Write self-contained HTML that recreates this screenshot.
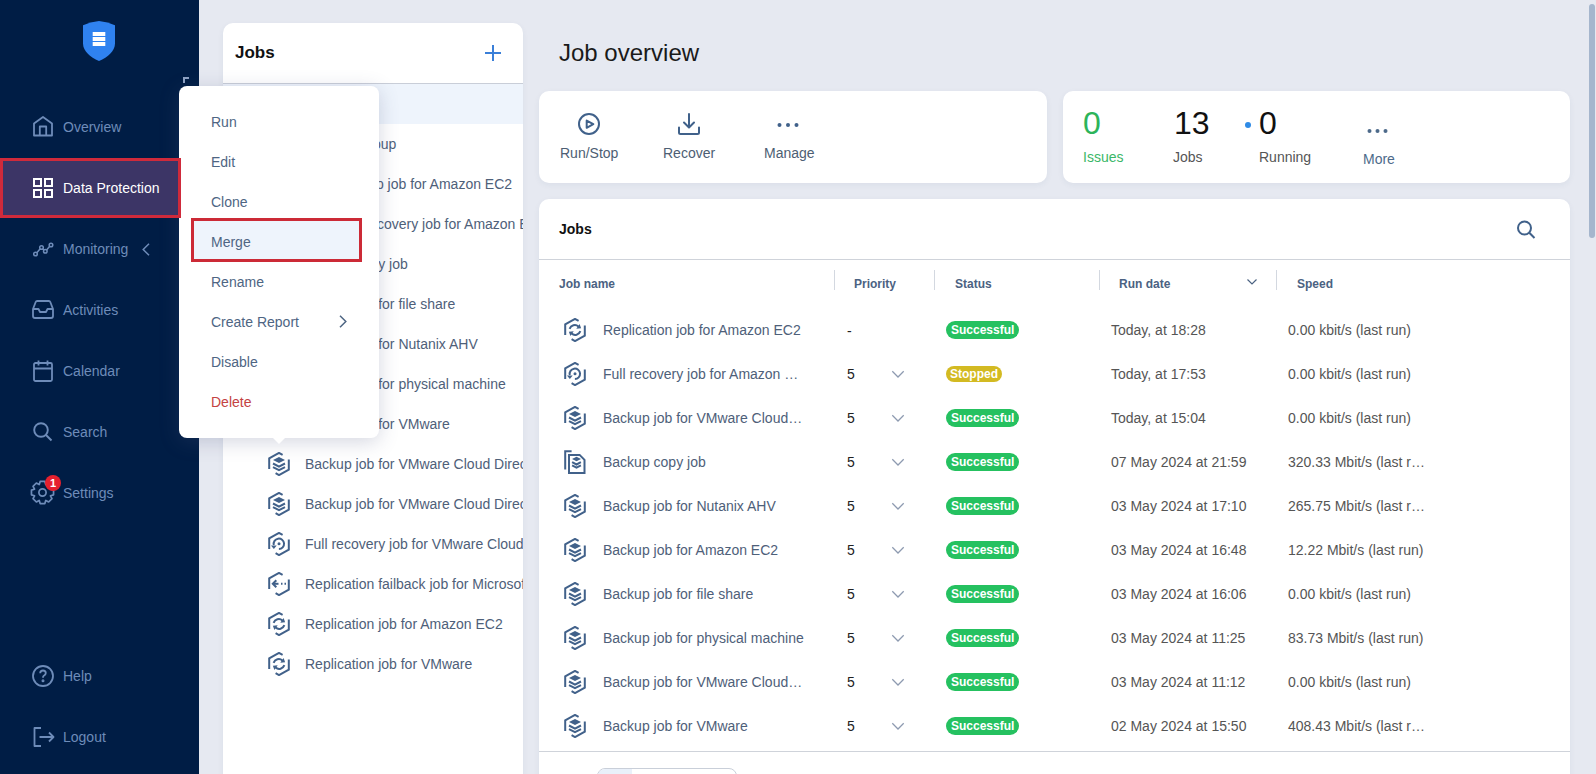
<!DOCTYPE html>
<html><head><meta charset="utf-8">
<style>
*{box-sizing:border-box;margin:0;padding:0}
html,body{width:1596px;height:774px;overflow:hidden}
body{background:#e6e9f1;font-family:"Liberation Sans",sans-serif;font-size:14px;position:relative}
.abs{position:absolute}
#side{left:0;top:0;width:199px;height:774px;background:#001d45}
.nav{position:absolute;left:0;width:199px;height:20px;color:#6e8cb9;font-size:14px;line-height:20px}
.nav span{position:absolute;left:63px;top:0;white-space:nowrap}
.nav svg{position:absolute;left:33px;top:0}
#dp{position:absolute;left:0;top:158px;width:181px;height:60px;background:#3c3566;border:3px solid #cf2a3b;z-index:5}
.card{position:absolute;background:#fff;border-radius:10px;box-shadow:0 2px 6px rgba(40,60,100,.06)}
.lrow{position:absolute;left:223px;width:300px;height:40px;color:#4e6079;white-space:nowrap;overflow:hidden}
.lrow span{position:absolute;top:11px;line-height:18px}
.lrow svg{position:absolute;left:45px;top:8px}
.trow{position:absolute;left:539px;width:1031px;height:44px;white-space:nowrap}
.trow .ic{position:absolute;left:24px;top:10px}
.trow .nm{position:absolute;left:64px;top:13px;line-height:18px;color:#4e6079}
.trow .pr{position:absolute;left:308px;top:13px;line-height:18px;color:#222}
.trow .chev{position:absolute;left:352px;top:17.5px}
.trow .badge{position:absolute;left:407px;top:13px;height:18px;border-radius:9px;background:#25c160;color:#fff;font-weight:bold;font-size:12px;line-height:18px;padding:0 5px}
.trow .badge.st{background:#d3ba22;height:16px;line-height:16px;top:14px;border-radius:8px;padding:0 4px}
.trow .dt{position:absolute;left:572px;top:13px;line-height:18px;color:#555}
.trow .sp{position:absolute;left:749px;top:13px;line-height:18px;color:#555}
.th{position:absolute;top:277px;font-size:12px;font-weight:bold;color:#4b6282;line-height:14px}
.sep{position:absolute;top:270px;width:1px;height:20px;background:#d3d8e0}
.menu{position:absolute;left:179px;top:86px;width:200px;height:352px;background:#fff;border-radius:8px;box-shadow:0 4px 20px rgba(75,85,125,.24)}
.mi{position:absolute;left:32px;color:#4e6583;line-height:18px}
</style></head><body>

<!-- SIDEBAR -->
<div id="side" class="abs">
  <svg class="abs" style="left:83px;top:21px" width="32" height="40" viewBox="0 0 32 40">
    <path d="M16 0 Q7 1 0 4.2 V22.5 C0 30 7 36 16 40 C25 36 32 30 32 22.5 V4.2 Q25 1 16 0Z" fill="#2f82f0"/>
    <rect x="9.7" y="11" width="12.6" height="4" fill="#fff"/>
    <rect x="9.7" y="16" width="12.6" height="4" fill="#fff"/>
    <rect x="9.7" y="21" width="12.6" height="4" fill="#fff"/>
  </svg>
  <svg class="abs" style="left:183px;top:77px" width="6" height="6" viewBox="0 0 6 6"><path d="M1 6V1H6" stroke="#8ea2c4" stroke-width="2" fill="none"/></svg>

  <div class="nav" style="top:117px"><svg style="top:-1px" width="20" height="21" viewBox="0 0 20 21" fill="none" stroke="#6e8cb9" stroke-width="1.8" stroke-linejoin="round"><path d="M1 7.5 L10 1 L19 7.5 V19.5 H1Z"/><path d="M6.8 19.5 V10.5 H13.2 V19.5"/></svg><span>Overview</span></div>

  <div id="dp"></div>
  <div class="nav" style="top:178px;color:#fff;z-index:6"><svg width="20" height="20" viewBox="0 0 20 20" fill="none" stroke="#fff" stroke-width="2"><rect x="1" y="1" width="7" height="7"/><rect x="12" y="1" width="7" height="7"/><rect x="1" y="12" width="7" height="7"/><rect x="12" y="12" width="7" height="7"/></svg><span>Data Protection</span></div>

  <div class="nav" style="top:239px"><svg width="21" height="20" viewBox="0 0 21 20" fill="none" stroke="#6e8cb9" stroke-width="1.5"><circle cx="2.5" cy="15" r="1.8"/><circle cx="8.5" cy="8.5" r="1.8"/><circle cx="12.3" cy="12.3" r="1.8"/><circle cx="18" cy="6" r="1.8"/><path d="M3.8 13.7 L7.2 9.8 M9.8 9.8 L11 11 M13.6 11 L16.7 7.3"/></svg><span>Monitoring</span>
    <svg style="left:142px;top:3.5px" width="8" height="13" viewBox="0 0 8 13" fill="none" stroke="#6e8cb9" stroke-width="1.5"><path d="M7 0.8 L1.2 6.5 L7 12.2"/></svg></div>

  <div class="nav" style="top:300px"><svg style="left:32px" width="22" height="20" viewBox="0 0 22 20" fill="none" stroke="#6e8cb9" stroke-width="1.8" stroke-linejoin="round"><path d="M1 9 L3.7 2 Q4.1 1 5.1 1 H16.9 Q17.9 1 18.3 2 L21 9 V16 Q21 18 19 18 H3 Q1 18 1 16Z"/><path d="M1 9 H6.5 L8 12 H14 L15.5 9 H21"/></svg><span>Activities</span></div>

  <div class="nav" style="top:361px"><svg style="top:-1px" width="20" height="22" viewBox="0 0 20 22" fill="none" stroke="#6e8cb9" stroke-width="1.8"><rect x="1" y="3" width="18" height="18" rx="1.5"/><path d="M1 8.5 H19 M5.5 0.5 V5.5 M14.5 0.5 V5.5"/></svg><span>Calendar</span></div>

  <div class="nav" style="top:422px"><svg width="20" height="20" viewBox="0 0 20 20" fill="none" stroke="#6e8cb9" stroke-width="1.9"><circle cx="8" cy="8" r="6.8"/><path d="M13 13 L18.5 18.5"/></svg><span>Search</span></div>

  <div class="nav" style="top:483px"><svg style="left:30px;top:-3px" width="25" height="25" viewBox="0 0 25 25" fill="none" stroke="#6e8cb9" stroke-width="1.7" stroke-linejoin="round"><path d="M9.28 4.53 L10.15 1.45 L14.85 1.45 L15.72 4.53 L15.86 4.58 L18.65 3.02 L21.98 6.35 L20.42 9.14 L20.47 9.28 L23.55 10.15 L23.55 14.85 L20.47 15.72 L20.42 15.86 L21.98 18.65 L18.65 21.98 L15.86 20.42 L15.72 20.47 L14.85 23.55 L10.15 23.55 L9.28 20.47 L9.14 20.42 L6.35 21.98 L3.02 18.65 L4.58 15.86 L4.53 15.72 L1.45 14.85 L1.45 10.15 L4.53 9.28 L4.58 9.14 L3.02 6.35 L6.35 3.02 L9.14 4.58Z"/><circle cx="12.5" cy="12.5" r="3.6"/></svg><span>Settings</span></div>
  <div class="abs" style="left:45px;top:475px;width:16px;height:16px;border-radius:50%;background:#e5202e;color:#fff;font-size:11px;font-weight:bold;line-height:16px;text-align:center">1</div>

  <div class="nav" style="top:666px"><svg style="left:32px;top:-1px" width="22" height="22" viewBox="0 0 22 22" fill="none" stroke="#6e8cb9" stroke-width="1.8"><circle cx="11" cy="11" r="10"/><path d="M8.2 8.3 Q8.2 5.5 11 5.5 Q13.8 5.5 13.8 8.1 Q13.8 9.8 11.8 10.8 Q11 11.3 11 12.8"/><circle cx="11" cy="15.8" r="0.6" fill="#6e8cb9"/></svg><span>Help</span></div>

  <div class="nav" style="top:727px"><svg width="22" height="20" viewBox="0 0 22 20" fill="none" stroke="#6e8cb9" stroke-width="1.8" stroke-linejoin="round"><path d="M8 1 H1.5 V19 H8"/><path d="M6.5 10 H20.5 M16 5.5 L20.5 10 L16 14.5"/></svg><span>Logout</span></div>
</div>

<!-- MIDDLE PANEL -->
<div class="card" style="left:223px;top:23px;width:300px;height:760px;overflow:hidden;border-radius:10px 10px 0 0">
  <div class="abs" style="left:12px;top:20px;font-size:17px;font-weight:bold;color:#111;line-height:20px">Jobs</div>
  <svg class="abs" style="left:262px;top:22px" width="16" height="16" viewBox="0 0 16 16" stroke="#3a7fd8" stroke-width="2"><path d="M8 0V16M0 8H16"/></svg>
  <div class="abs" style="left:0;top:60px;width:300px;height:1px;background:#c9ced8"></div>
  <div class="abs" style="left:0;top:61px;width:300px;height:40px;background:#eef4fc"></div>
</div>
<div class="abs" style="left:0;top:0"><div class="lrow" style="top:84px"><svg class="" style="left:45px;top:8px" width="22" height="24" viewBox="0 0 22 24" fill="none" stroke="#41618a" stroke-width="2"><path d="M14.6 2.9 L11 0.9 L1.2 6.4 V17" /><path d="M20.8 7.4 V17.6 L11 23.1 L7.6 21.2"/><path d="M5 8 L11 4.9 L17 8 L11 11.1Z" fill="#41618a" stroke="none"/><path d="M5 11.5 L11 14.6 L17 11.5 M5 15.1 L11 18.2 L17 15.1"/></svg><span style="left:82px">All jobs</span></div><div class="lrow" style="top:124px"><svg class="" style="left:45px;top:8px" width="22" height="24" viewBox="0 0 22 24" fill="none" stroke="#41618a" stroke-width="2"><path d="M14.6 2.9 L11 0.9 L1.2 6.4 V17" /><path d="M20.8 7.4 V17.6 L11 23.1 L7.6 21.2"/><path d="M5 8 L11 4.9 L17 8 L11 11.1Z" fill="#41618a" stroke="none"/><path d="M5 11.5 L11 14.6 L17 11.5 M5 15.1 L11 18.2 L17 15.1"/></svg><span style="left:87px">Backup group</span></div><div class="lrow" style="top:164px"><svg class="" style="left:45px;top:8px" width="22" height="24" viewBox="0 0 22 24" fill="none" stroke="#41618a" stroke-width="2"><path d="M14.6 2.9 L11 0.9 L1.2 6.4 V17" /><path d="M20.8 7.4 V17.6 L11 23.1 L7.6 21.2"/><path d="M5 8 L11 4.9 L17 8 L11 11.1Z" fill="#41618a" stroke="none"/><path d="M5 11.5 L11 14.6 L17 11.5 M5 15.1 L11 18.2 L17 15.1"/></svg><span style="left:114px">Backup job for Amazon EC2</span></div><div class="lrow" style="top:204px"><svg class="" style="left:45px;top:8px" width="22" height="24" viewBox="0 0 22 24" fill="none" stroke="#41618a" stroke-width="2"><path d="M14.6 2.9 L11 0.9 L1.2 6.4 V17" /><path d="M20.8 7.4 V17.6 L11 23.1 L7.6 21.2"/><path d="M10.9 17 A5.2 5.2 0 1 0 5.8 13"/><path d="M3 13.4 H8.7 L5.85 16.9Z" fill="#41618a" stroke="none"/><circle cx="11" cy="11.8" r="1.5" fill="#41618a" stroke="none"/></svg><span style="left:115px">Full recovery job for Amazon EBS</span></div><div class="lrow" style="top:244px"><svg class="" style="left:45px;top:8px" width="22" height="24" viewBox="0 0 22 24" fill="none" stroke="#41618a" stroke-width="2"><path d="M7.6 1.2 H1.2 V19.5"/><path d="M5 4.9 H15.6 L20.5 9.8 V22.9 H5Z"/><path d="M8 9 L12.5 6.7 L17 9 L12.5 11.3Z" fill="#41618a" stroke="none"/><path d="M8.1 12.2 L12.5 14.5 L16.9 12.2 M8.1 15.3 L12.5 17.6 L16.9 15.3"/></svg><span style="left:82px">Backup copy job</span></div><div class="lrow" style="top:284px"><svg class="" style="left:45px;top:8px" width="22" height="24" viewBox="0 0 22 24" fill="none" stroke="#41618a" stroke-width="2"><path d="M14.6 2.9 L11 0.9 L1.2 6.4 V17" /><path d="M20.8 7.4 V17.6 L11 23.1 L7.6 21.2"/><path d="M5 8 L11 4.9 L17 8 L11 11.1Z" fill="#41618a" stroke="none"/><path d="M5 11.5 L11 14.6 L17 11.5 M5 15.1 L11 18.2 L17 15.1"/></svg><span style="left:82px">Backup job for file share</span></div><div class="lrow" style="top:324px"><svg class="" style="left:45px;top:8px" width="22" height="24" viewBox="0 0 22 24" fill="none" stroke="#41618a" stroke-width="2"><path d="M14.6 2.9 L11 0.9 L1.2 6.4 V17" /><path d="M20.8 7.4 V17.6 L11 23.1 L7.6 21.2"/><path d="M5 8 L11 4.9 L17 8 L11 11.1Z" fill="#41618a" stroke="none"/><path d="M5 11.5 L11 14.6 L17 11.5 M5 15.1 L11 18.2 L17 15.1"/></svg><span style="left:82px">Backup job for Nutanix AHV</span></div><div class="lrow" style="top:364px"><svg class="" style="left:45px;top:8px" width="22" height="24" viewBox="0 0 22 24" fill="none" stroke="#41618a" stroke-width="2"><path d="M14.6 2.9 L11 0.9 L1.2 6.4 V17" /><path d="M20.8 7.4 V17.6 L11 23.1 L7.6 21.2"/><path d="M5 8 L11 4.9 L17 8 L11 11.1Z" fill="#41618a" stroke="none"/><path d="M5 11.5 L11 14.6 L17 11.5 M5 15.1 L11 18.2 L17 15.1"/></svg><span style="left:82px">Backup job for physical machine</span></div><div class="lrow" style="top:404px"><svg class="" style="left:45px;top:8px" width="22" height="24" viewBox="0 0 22 24" fill="none" stroke="#41618a" stroke-width="2"><path d="M14.6 2.9 L11 0.9 L1.2 6.4 V17" /><path d="M20.8 7.4 V17.6 L11 23.1 L7.6 21.2"/><path d="M5 8 L11 4.9 L17 8 L11 11.1Z" fill="#41618a" stroke="none"/><path d="M5 11.5 L11 14.6 L17 11.5 M5 15.1 L11 18.2 L17 15.1"/></svg><span style="left:82px">Backup job for VMware</span></div><div class="lrow" style="top:444px"><svg class="" style="left:45px;top:8px" width="22" height="24" viewBox="0 0 22 24" fill="none" stroke="#41618a" stroke-width="2"><path d="M14.6 2.9 L11 0.9 L1.2 6.4 V17" /><path d="M20.8 7.4 V17.6 L11 23.1 L7.6 21.2"/><path d="M5 8 L11 4.9 L17 8 L11 11.1Z" fill="#41618a" stroke="none"/><path d="M5 11.5 L11 14.6 L17 11.5 M5 15.1 L11 18.2 L17 15.1"/></svg><span style="left:82px">Backup job for VMware Cloud Director 1</span></div><div class="lrow" style="top:484px"><svg class="" style="left:45px;top:8px" width="22" height="24" viewBox="0 0 22 24" fill="none" stroke="#41618a" stroke-width="2"><path d="M14.6 2.9 L11 0.9 L1.2 6.4 V17" /><path d="M20.8 7.4 V17.6 L11 23.1 L7.6 21.2"/><path d="M5 8 L11 4.9 L17 8 L11 11.1Z" fill="#41618a" stroke="none"/><path d="M5 11.5 L11 14.6 L17 11.5 M5 15.1 L11 18.2 L17 15.1"/></svg><span style="left:82px">Backup job for VMware Cloud Director 2</span></div><div class="lrow" style="top:524px"><svg class="" style="left:45px;top:8px" width="22" height="24" viewBox="0 0 22 24" fill="none" stroke="#41618a" stroke-width="2"><path d="M14.6 2.9 L11 0.9 L1.2 6.4 V17" /><path d="M20.8 7.4 V17.6 L11 23.1 L7.6 21.2"/><path d="M10.9 17 A5.2 5.2 0 1 0 5.8 13"/><path d="M3 13.4 H8.7 L5.85 16.9Z" fill="#41618a" stroke="none"/><circle cx="11" cy="11.8" r="1.5" fill="#41618a" stroke="none"/></svg><span style="left:82px">Full recovery job for VMware Cloud Director</span></div><div class="lrow" style="top:564px"><svg class="" style="left:45px;top:8px" width="22" height="24" viewBox="0 0 22 24" fill="none" stroke="#41618a" stroke-width="2"><path d="M14.6 2.9 L11 0.9 L1.2 6.4 V17" /><path d="M20.8 7.4 V17.6 L11 23.1 L7.6 21.2"/><path d="M5 11.8 H10.5" /><path d="M8.3 8.3 L4.8 11.8 L8.3 15.3"/><path d="M13 11.8 H14.5 M16.5 11.8 H18" /></svg><span style="left:82px">Replication failback job for Microsoft Hyper-V</span></div><div class="lrow" style="top:604px"><svg class="" style="left:45px;top:8px" width="22" height="24" viewBox="0 0 22 24" fill="none" stroke="#41618a" stroke-width="2"><path d="M14.6 2.9 L11 0.9 L1.2 6.4 V17" /><path d="M20.8 7.4 V17.6 L11 23.1 L7.6 21.2"/><path d="M5.6 10.8 A5.6 5.6 0 0 1 14.4 8.4"/><path d="M15.6 5.9 L17.1 10.3 L12.3 10.7Z" fill="#41618a" stroke="none"/><path d="M16.4 13.2 A5.6 5.6 0 0 1 7.6 15.6"/><path d="M6.4 18.1 L4.9 13.7 L9.7 13.3Z" fill="#41618a" stroke="none"/></svg><span style="left:82px">Replication job for Amazon EC2</span></div><div class="lrow" style="top:644px"><svg class="" style="left:45px;top:8px" width="22" height="24" viewBox="0 0 22 24" fill="none" stroke="#41618a" stroke-width="2"><path d="M14.6 2.9 L11 0.9 L1.2 6.4 V17" /><path d="M20.8 7.4 V17.6 L11 23.1 L7.6 21.2"/><path d="M5.6 10.8 A5.6 5.6 0 0 1 14.4 8.4"/><path d="M15.6 5.9 L17.1 10.3 L12.3 10.7Z" fill="#41618a" stroke="none"/><path d="M16.4 13.2 A5.6 5.6 0 0 1 7.6 15.6"/><path d="M6.4 18.1 L4.9 13.7 L9.7 13.3Z" fill="#41618a" stroke="none"/></svg><span style="left:82px">Replication job for VMware</span></div></div>

<!-- HEADER -->
<div class="abs" style="left:559px;top:39px;font-size:24px;color:#1a1a1a;line-height:28px">Job overview</div>

<!-- CARD 1 -->
<div class="card" style="left:539px;top:91px;width:508px;height:92px"></div>
<svg class="abs" style="left:577px;top:112px" width="24" height="24" viewBox="0 0 24 24" fill="none" stroke="#40618a" stroke-width="2"><circle cx="12" cy="12" r="10"/><path d="M9.7 8.6 L16.3 12.2 L9.7 15.8Z" stroke-linejoin="round"/></svg>
<div class="abs" style="left:560px;top:144px;color:#4d5e73;line-height:18px">Run/Stop</div>
<svg class="abs" style="left:677px;top:112px" width="24" height="24" viewBox="0 0 24 24" fill="none" stroke="#40618a" stroke-width="2" stroke-linecap="round" stroke-linejoin="round"><path d="M12 2V15 M7 10.5 L12 15.5 L17 10.5 M2 15.5V20.5Q2 22 3.5 22H20.5Q22 22 22 20.5V15.5"/></svg>
<div class="abs" style="left:663px;top:144px;color:#4d5e73;line-height:18px">Recover</div>
<svg class="abs" style="left:776px;top:121px" width="24" height="8" viewBox="0 0 24 8" fill="#40618a"><circle cx="3.5" cy="4" r="2"/><circle cx="12" cy="4" r="2"/><circle cx="20.5" cy="4" r="2"/></svg>
<div class="abs" style="left:764px;top:144px;color:#4d5e73;line-height:18px">Manage</div>

<!-- CARD 2 -->
<div class="card" style="left:1063px;top:91px;width:507px;height:92px"></div>
<div class="abs" style="left:1083px;top:105px;font-size:32px;color:#2db45a;line-height:36px">0</div>
<div class="abs" style="left:1083px;top:148px;color:#3bb768;line-height:18px">Issues</div>
<div class="abs" style="left:1174px;top:105px;font-size:32px;color:#111;line-height:36px">13</div>
<div class="abs" style="left:1173px;top:148px;color:#555;line-height:18px">Jobs</div>
<div class="abs" style="left:1245px;top:122px;width:6px;height:6px;border-radius:50%;background:#2f8be6"></div>
<div class="abs" style="left:1259px;top:105px;font-size:32px;color:#111;line-height:36px">0</div>
<div class="abs" style="left:1259px;top:148px;color:#555;line-height:18px">Running</div>
<svg class="abs" style="left:1366px;top:127px" width="24" height="8" viewBox="0 0 24 8" fill="#4d6a8a"><circle cx="3.5" cy="4" r="2"/><circle cx="11.5" cy="4" r="2"/><circle cx="19.5" cy="4" r="2"/></svg>
<div class="abs" style="left:1363px;top:150px;color:#4d6a8a;line-height:18px">More</div>

<!-- JOBS CARD -->
<div class="card" style="left:539px;top:199px;width:1031px;height:600px;border-radius:10px 10px 0 0"></div>
<div class="abs" style="left:559px;top:221px;font-weight:bold;color:#111;line-height:16px">Jobs</div>
<svg class="abs" style="left:1515px;top:219px" width="22" height="22" viewBox="0 0 22 22" fill="none" stroke="#40618a" stroke-width="2"><circle cx="9.5" cy="9" r="6.5"/><path d="M14.3 13.8 L19.5 19"/></svg>
<div class="abs" style="left:539px;top:259px;width:1031px;height:1px;background:#cfd3da"></div>
<div class="th" style="left:559px">Job name</div>
<div class="sep" style="left:834px"></div>
<div class="th" style="left:854px">Priority</div>
<div class="sep" style="left:934px"></div>
<div class="th" style="left:955px">Status</div>
<div class="sep" style="left:1099px"></div>
<div class="th" style="left:1119px">Run date</div>
<svg class="abs" style="left:1247px;top:279px" width="10" height="6" viewBox="0 0 10 6" fill="none" stroke="#4b6282" stroke-width="1.2"><path d="M0.5 0.5 L5 5 L9.5 0.5"/></svg>
<div class="sep" style="left:1276px"></div>
<div class="th" style="left:1297px">Speed</div>
<div class="trow" style="top:308px"><svg class="ic" style="left:25px;top:10px" width="22" height="24" viewBox="0 0 22 24" fill="none" stroke="#41618a" stroke-width="2"><path d="M14.6 2.9 L11 0.9 L1.2 6.4 V17" /><path d="M20.8 7.4 V17.6 L11 23.1 L7.6 21.2"/><path d="M5.6 10.8 A5.6 5.6 0 0 1 14.4 8.4"/><path d="M15.6 5.9 L17.1 10.3 L12.3 10.7Z" fill="#41618a" stroke="none"/><path d="M16.4 13.2 A5.6 5.6 0 0 1 7.6 15.6"/><path d="M6.4 18.1 L4.9 13.7 L9.7 13.3Z" fill="#41618a" stroke="none"/></svg><span class="nm">Replication job for Amazon EC2</span><span class="pr" style="top:14px">-</span><span class="badge">Successful</span><span class="dt">Today, at 18:28</span><span class="sp">0.00 kbit/s (last run)</span></div><div class="trow" style="top:352px"><svg class="ic" style="left:25px;top:10px" width="22" height="24" viewBox="0 0 22 24" fill="none" stroke="#41618a" stroke-width="2"><path d="M14.6 2.9 L11 0.9 L1.2 6.4 V17" /><path d="M20.8 7.4 V17.6 L11 23.1 L7.6 21.2"/><path d="M10.9 17 A5.2 5.2 0 1 0 5.8 13"/><path d="M3 13.4 H8.7 L5.85 16.9Z" fill="#41618a" stroke="none"/><circle cx="11" cy="11.8" r="1.5" fill="#41618a" stroke="none"/></svg><span class="nm">Full recovery job for Amazon …</span><span class="pr">5</span><svg class="chev" width="14" height="9" viewBox="0 0 14 9" fill="none" stroke="#8d9ab0" stroke-width="1.25"><path d="M1.3 1.3 L7 7 L12.7 1.3"/></svg><span class="badge st">Stopped</span><span class="dt">Today, at 17:53</span><span class="sp">0.00 kbit/s (last run)</span></div><div class="trow" style="top:396px"><svg class="ic" style="left:25px;top:10px" width="22" height="24" viewBox="0 0 22 24" fill="none" stroke="#41618a" stroke-width="2"><path d="M14.6 2.9 L11 0.9 L1.2 6.4 V17" /><path d="M20.8 7.4 V17.6 L11 23.1 L7.6 21.2"/><path d="M5 8 L11 4.9 L17 8 L11 11.1Z" fill="#41618a" stroke="none"/><path d="M5 11.5 L11 14.6 L17 11.5 M5 15.1 L11 18.2 L17 15.1"/></svg><span class="nm">Backup job for VMware Cloud…</span><span class="pr">5</span><svg class="chev" width="14" height="9" viewBox="0 0 14 9" fill="none" stroke="#8d9ab0" stroke-width="1.25"><path d="M1.3 1.3 L7 7 L12.7 1.3"/></svg><span class="badge">Successful</span><span class="dt">Today, at 15:04</span><span class="sp">0.00 kbit/s (last run)</span></div><div class="trow" style="top:440px"><svg class="ic" style="left:25px;top:10px" width="22" height="24" viewBox="0 0 22 24" fill="none" stroke="#41618a" stroke-width="2"><path d="M7.6 1.2 H1.2 V19.5"/><path d="M5 4.9 H15.6 L20.5 9.8 V22.9 H5Z"/><path d="M8 9 L12.5 6.7 L17 9 L12.5 11.3Z" fill="#41618a" stroke="none"/><path d="M8.1 12.2 L12.5 14.5 L16.9 12.2 M8.1 15.3 L12.5 17.6 L16.9 15.3"/></svg><span class="nm">Backup copy job</span><span class="pr">5</span><svg class="chev" width="14" height="9" viewBox="0 0 14 9" fill="none" stroke="#8d9ab0" stroke-width="1.25"><path d="M1.3 1.3 L7 7 L12.7 1.3"/></svg><span class="badge">Successful</span><span class="dt">07 May 2024 at 21:59</span><span class="sp">320.33 Mbit/s (last r…</span></div><div class="trow" style="top:484px"><svg class="ic" style="left:25px;top:10px" width="22" height="24" viewBox="0 0 22 24" fill="none" stroke="#41618a" stroke-width="2"><path d="M14.6 2.9 L11 0.9 L1.2 6.4 V17" /><path d="M20.8 7.4 V17.6 L11 23.1 L7.6 21.2"/><path d="M5 8 L11 4.9 L17 8 L11 11.1Z" fill="#41618a" stroke="none"/><path d="M5 11.5 L11 14.6 L17 11.5 M5 15.1 L11 18.2 L17 15.1"/></svg><span class="nm">Backup job for Nutanix AHV</span><span class="pr">5</span><svg class="chev" width="14" height="9" viewBox="0 0 14 9" fill="none" stroke="#8d9ab0" stroke-width="1.25"><path d="M1.3 1.3 L7 7 L12.7 1.3"/></svg><span class="badge">Successful</span><span class="dt">03 May 2024 at 17:10</span><span class="sp">265.75 Mbit/s (last r…</span></div><div class="trow" style="top:528px"><svg class="ic" style="left:25px;top:10px" width="22" height="24" viewBox="0 0 22 24" fill="none" stroke="#41618a" stroke-width="2"><path d="M14.6 2.9 L11 0.9 L1.2 6.4 V17" /><path d="M20.8 7.4 V17.6 L11 23.1 L7.6 21.2"/><path d="M5 8 L11 4.9 L17 8 L11 11.1Z" fill="#41618a" stroke="none"/><path d="M5 11.5 L11 14.6 L17 11.5 M5 15.1 L11 18.2 L17 15.1"/></svg><span class="nm">Backup job for Amazon EC2</span><span class="pr">5</span><svg class="chev" width="14" height="9" viewBox="0 0 14 9" fill="none" stroke="#8d9ab0" stroke-width="1.25"><path d="M1.3 1.3 L7 7 L12.7 1.3"/></svg><span class="badge">Successful</span><span class="dt">03 May 2024 at 16:48</span><span class="sp">12.22 Mbit/s (last run)</span></div><div class="trow" style="top:572px"><svg class="ic" style="left:25px;top:10px" width="22" height="24" viewBox="0 0 22 24" fill="none" stroke="#41618a" stroke-width="2"><path d="M14.6 2.9 L11 0.9 L1.2 6.4 V17" /><path d="M20.8 7.4 V17.6 L11 23.1 L7.6 21.2"/><path d="M5 8 L11 4.9 L17 8 L11 11.1Z" fill="#41618a" stroke="none"/><path d="M5 11.5 L11 14.6 L17 11.5 M5 15.1 L11 18.2 L17 15.1"/></svg><span class="nm">Backup job for file share</span><span class="pr">5</span><svg class="chev" width="14" height="9" viewBox="0 0 14 9" fill="none" stroke="#8d9ab0" stroke-width="1.25"><path d="M1.3 1.3 L7 7 L12.7 1.3"/></svg><span class="badge">Successful</span><span class="dt">03 May 2024 at 16:06</span><span class="sp">0.00 kbit/s (last run)</span></div><div class="trow" style="top:616px"><svg class="ic" style="left:25px;top:10px" width="22" height="24" viewBox="0 0 22 24" fill="none" stroke="#41618a" stroke-width="2"><path d="M14.6 2.9 L11 0.9 L1.2 6.4 V17" /><path d="M20.8 7.4 V17.6 L11 23.1 L7.6 21.2"/><path d="M5 8 L11 4.9 L17 8 L11 11.1Z" fill="#41618a" stroke="none"/><path d="M5 11.5 L11 14.6 L17 11.5 M5 15.1 L11 18.2 L17 15.1"/></svg><span class="nm">Backup job for physical machine</span><span class="pr">5</span><svg class="chev" width="14" height="9" viewBox="0 0 14 9" fill="none" stroke="#8d9ab0" stroke-width="1.25"><path d="M1.3 1.3 L7 7 L12.7 1.3"/></svg><span class="badge">Successful</span><span class="dt">03 May 2024 at 11:25</span><span class="sp">83.73 Mbit/s (last run)</span></div><div class="trow" style="top:660px"><svg class="ic" style="left:25px;top:10px" width="22" height="24" viewBox="0 0 22 24" fill="none" stroke="#41618a" stroke-width="2"><path d="M14.6 2.9 L11 0.9 L1.2 6.4 V17" /><path d="M20.8 7.4 V17.6 L11 23.1 L7.6 21.2"/><path d="M5 8 L11 4.9 L17 8 L11 11.1Z" fill="#41618a" stroke="none"/><path d="M5 11.5 L11 14.6 L17 11.5 M5 15.1 L11 18.2 L17 15.1"/></svg><span class="nm">Backup job for VMware Cloud…</span><span class="pr">5</span><svg class="chev" width="14" height="9" viewBox="0 0 14 9" fill="none" stroke="#8d9ab0" stroke-width="1.25"><path d="M1.3 1.3 L7 7 L12.7 1.3"/></svg><span class="badge">Successful</span><span class="dt">03 May 2024 at 11:12</span><span class="sp">0.00 kbit/s (last run)</span></div><div class="trow" style="top:704px"><svg class="ic" style="left:25px;top:10px" width="22" height="24" viewBox="0 0 22 24" fill="none" stroke="#41618a" stroke-width="2"><path d="M14.6 2.9 L11 0.9 L1.2 6.4 V17" /><path d="M20.8 7.4 V17.6 L11 23.1 L7.6 21.2"/><path d="M5 8 L11 4.9 L17 8 L11 11.1Z" fill="#41618a" stroke="none"/><path d="M5 11.5 L11 14.6 L17 11.5 M5 15.1 L11 18.2 L17 15.1"/></svg><span class="nm">Backup job for VMware</span><span class="pr">5</span><svg class="chev" width="14" height="9" viewBox="0 0 14 9" fill="none" stroke="#8d9ab0" stroke-width="1.25"><path d="M1.3 1.3 L7 7 L12.7 1.3"/></svg><span class="badge">Successful</span><span class="dt">02 May 2024 at 15:50</span><span class="sp">408.43 Mbit/s (last r…</span></div>
<div class="abs" style="left:539px;top:751px;width:1031px;height:1px;background:#cfd3da"></div>
<div class="abs" style="left:597px;top:768px;width:140px;height:20px;border:1px solid #c9cfd9;border-radius:8px;background:#fff;overflow:hidden"><div style="width:34px;height:20px;background:#e9f0fa"></div></div>

<!-- scrollbar -->
<div class="abs" style="left:1589px;top:4px;width:6px;height:234px;border-radius:3px;background:#a5b6cd"></div>

<!-- POPUP MENU -->
<div class="menu">
  <div class="mi" style="top:27px">Run</div>
  <div class="mi" style="top:67px">Edit</div>
  <div class="mi" style="top:107px">Clone</div>
  <div class="abs" style="left:12px;top:132px;width:171px;height:44px;background:#eef4fc;border:3px solid #cc2a36"></div>
  <div class="mi" style="top:147px">Merge</div>
  <div class="mi" style="top:187px">Rename</div>
  <div class="mi" style="top:227px">Create Report</div>
  <svg class="abs" style="left:160px;top:229px" width="8" height="13" viewBox="0 0 8 13" fill="none" stroke="#4e6583" stroke-width="1.5"><path d="M1 0.8 L6.8 6.5 L1 12.2"/></svg>
  <div class="mi" style="top:267px">Disable</div>
  <div class="mi" style="top:307px;color:#c44242">Delete</div>
  <svg class="abs" style="left:93px;top:351px" width="14" height="8" viewBox="0 0 14 8"><path d="M0 0 L7 7 L14 0Z" fill="#fff"/></svg>
</div>

</body></html>
